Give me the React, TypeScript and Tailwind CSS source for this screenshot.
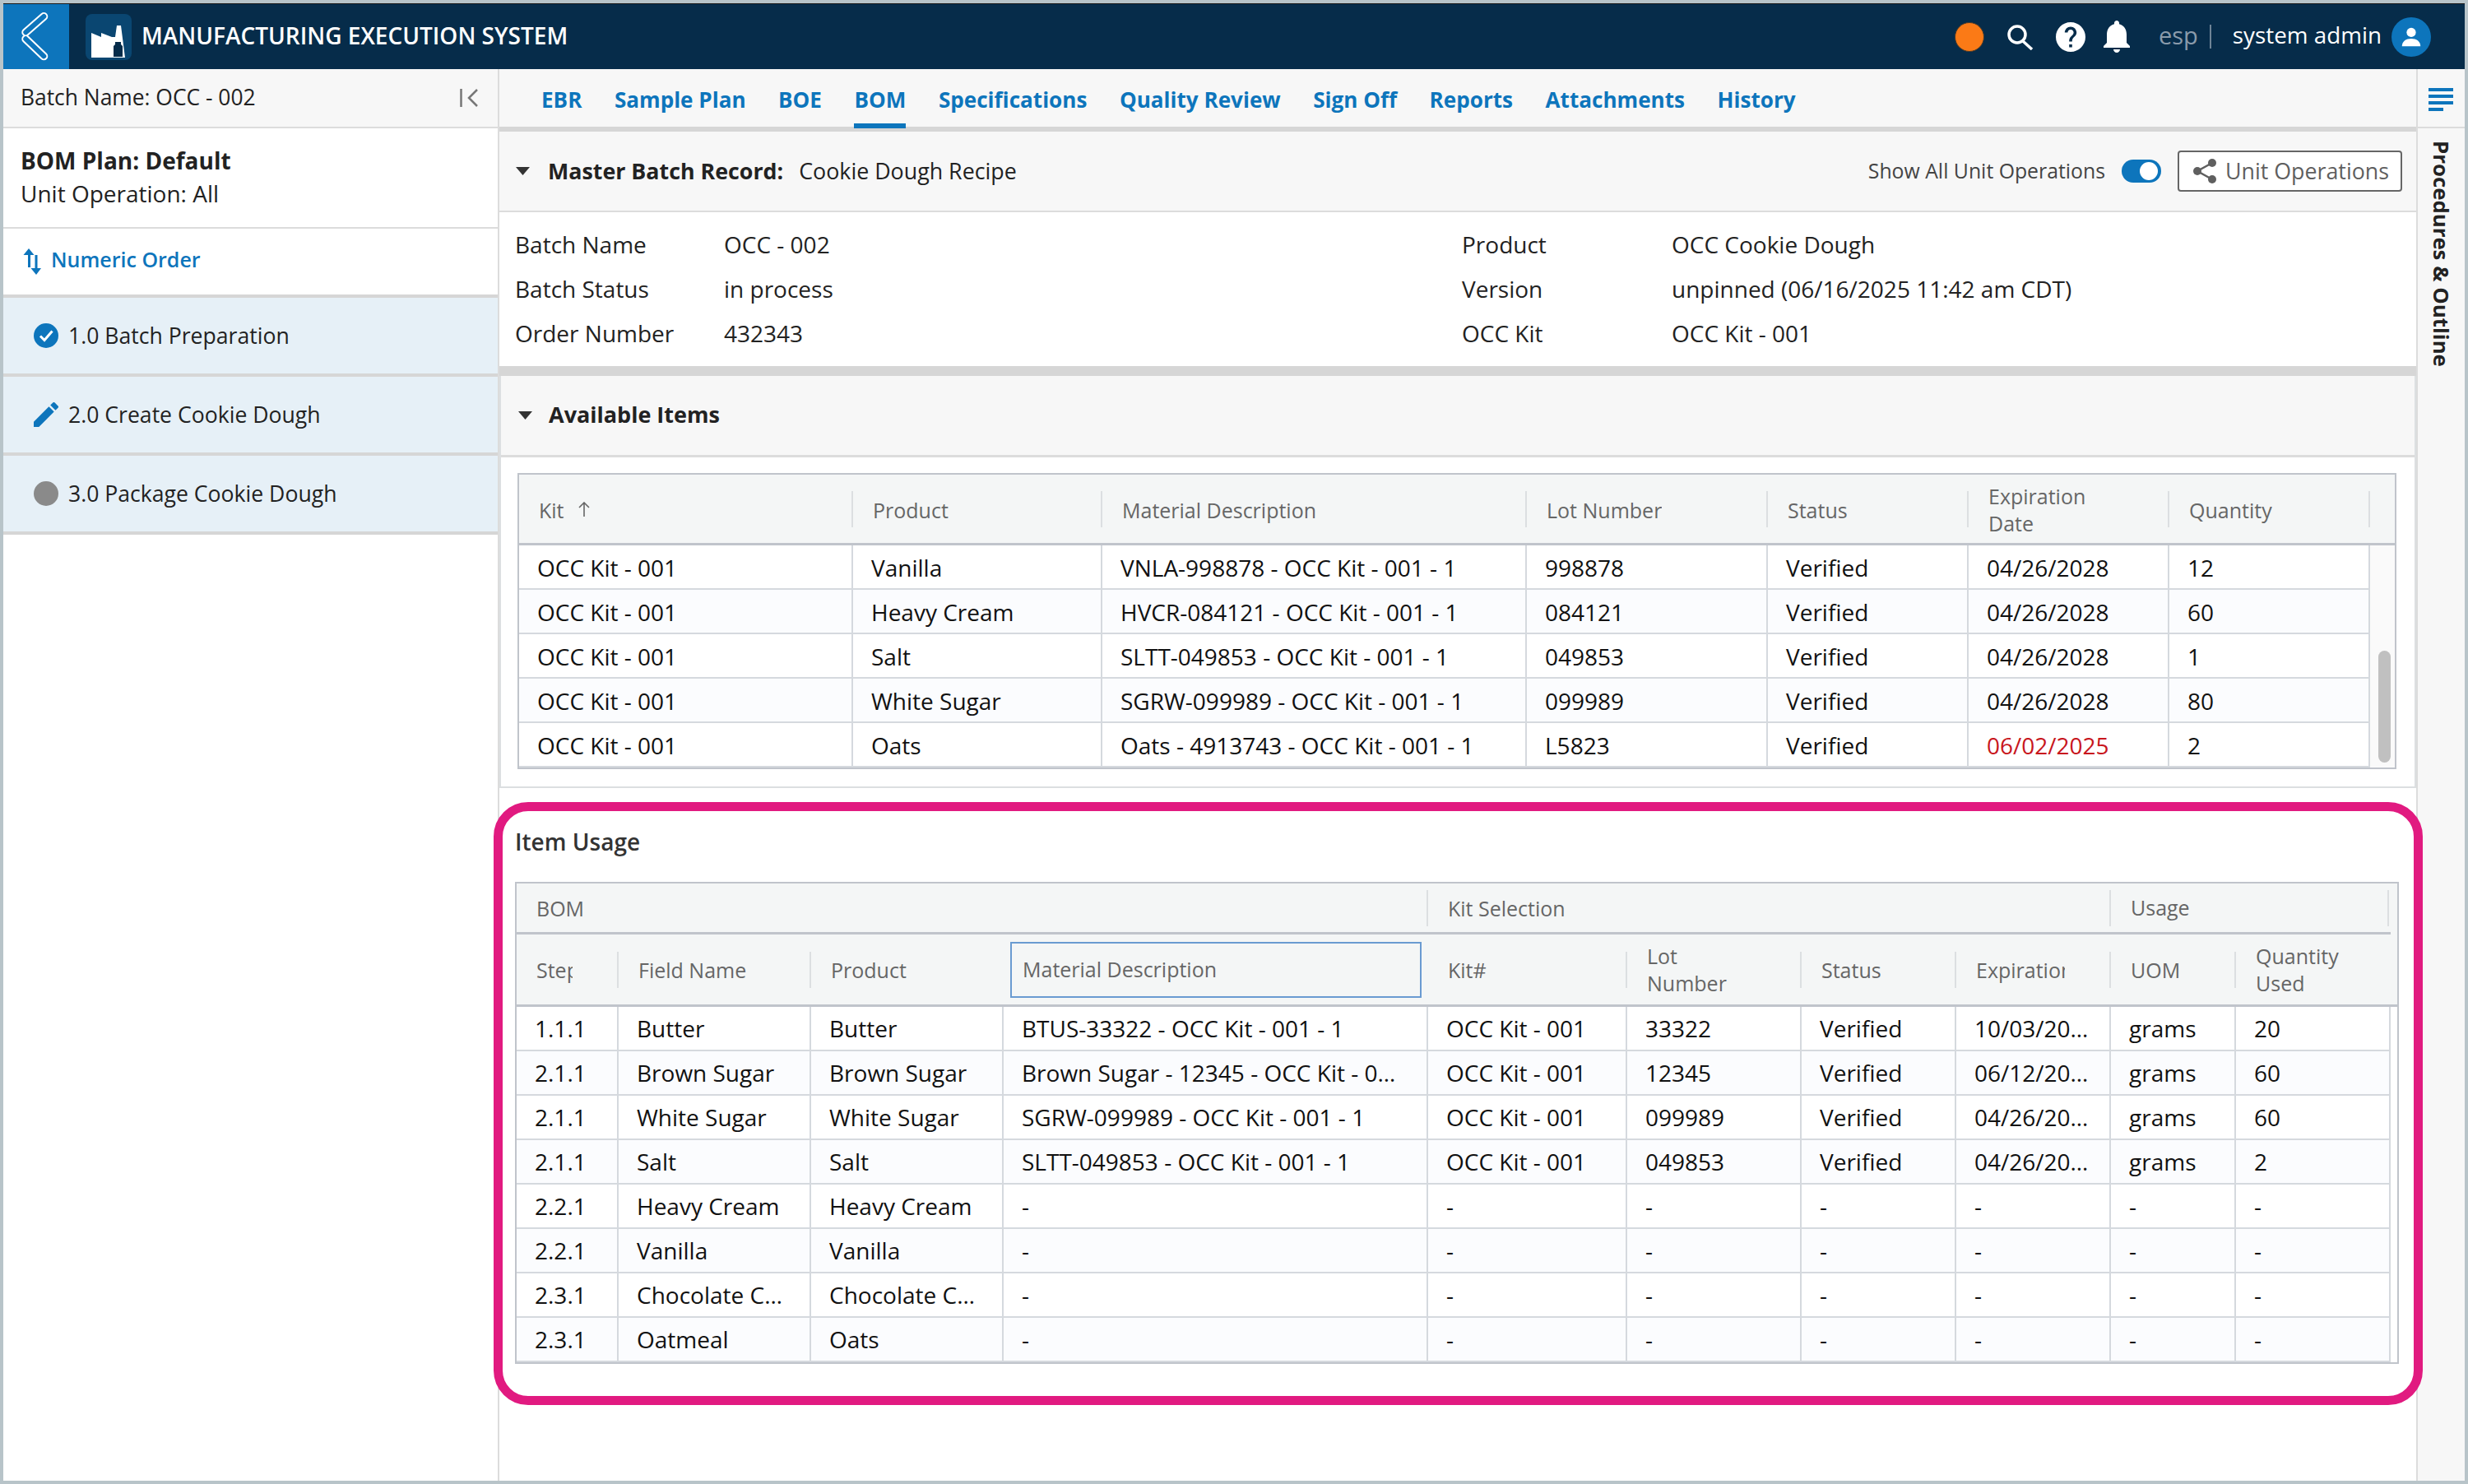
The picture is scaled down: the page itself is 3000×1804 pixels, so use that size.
import React from 'react';

interface StockRow {
  kit: string;
  product: string;
  material: string;
  lot: string;
  date: string;
  qty: string;
  expired?: boolean;
}

const tabs = ['EBR', 'Sample Plan', 'BOE', 'BOM', 'Specifications', 'Quality Review', 'Sign Off', 'Reports', 'Attachments', 'History'];

const stockRows: StockRow[] = [
  { kit: 'OCC Kit - 001', product: 'Vanilla', material: 'VNLA-998878 - OCC Kit - 001 - 1', lot: '998878', date: '04/26/2028', qty: '12' },
  { kit: 'OCC Kit - 001', product: 'Heavy Cream', material: 'HVCR-084121 - OCC Kit - 001 - 1', lot: '084121', date: '04/26/2028', qty: '60' },
  { kit: 'OCC Kit - 001', product: 'Salt', material: 'SLTT-049853 - OCC Kit - 001 - 1', lot: '049853', date: '04/26/2028', qty: '1' },
  { kit: 'OCC Kit - 001', product: 'White Sugar', material: 'SGRW-099989 - OCC Kit - 001 - 1', lot: '099989', date: '04/26/2028', qty: '80' },
  { kit: 'OCC Kit - 001', product: 'Oats', material: 'Oats - 4913743 - OCC Kit - 001 - 1', lot: 'L5823', date: '06/02/2025', qty: '2', expired: true },
];

const usageRows: string[][] = [
  ['1.1.1', 'Butter', 'Butter', 'BTUS-33322 - OCC Kit - 001 - 1', 'OCC Kit - 001', '33322', 'Verified', '10/03/2028', 'grams', '20'],
  ['2.1.1', 'Brown Sugar', 'Brown Sugar', 'Brown Sugar - 12345 - OCC Kit - 001 - 1', 'OCC Kit - 001', '12345', 'Verified', '06/12/2028', 'grams', '60'],
  ['2.1.1', 'White Sugar', 'White Sugar', 'SGRW-099989 - OCC Kit - 001 - 1', 'OCC Kit - 001', '099989', 'Verified', '04/26/2028', 'grams', '60'],
  ['2.1.1', 'Salt', 'Salt', 'SLTT-049853 - OCC Kit - 001 - 1', 'OCC Kit - 001', '049853', 'Verified', '04/26/2028', 'grams', '2'],
  ['2.2.1', 'Heavy Cream', 'Heavy Cream', '-', '-', '-', '-', '-', '-', '-'],
  ['2.2.1', 'Vanilla', 'Vanilla', '-', '-', '-', '-', '-', '-', '-'],
  ['2.3.1', 'Chocolate Chips', 'Chocolate Chips', '-', '-', '-', '-', '-', '-', '-'],
  ['2.3.1', 'Oatmeal', 'Oats', '-', '-', '-', '-', '-', '-', '-'],
];

const stockCols = 'grid-cols-[404px_303px_516px_293px_244px_244px_244px]';
const usageCols = 'grid-cols-[122px_234px_234px_516px_242px_212px_188px_188px_152px_188px]';

const Triangle = () => (
  <svg viewBox="0 0 17 10" className="w-[17px] h-[10px] shrink-0">
    <polygon points="0,0 17,0 8.5,10" fill="#333" />
  </svg>
);

interface HeadCellProps {
  label: string;
  sep?: boolean;
  first?: boolean;
  lower?: boolean;
  children?: React.ReactNode;
}

// header cell: short divider, then the label which clips when too narrow
const HeadCell = ({ label, sep = true, first, lower, children }: HeadCellProps) => (
  <div className="flex items-center min-w-0 overflow-hidden pr-[54px]">
    {!first && (sep ? <div className="w-[2px] h-[44px] bg-[#dcdfe1] shrink-0" /> : <div className="w-[2px] shrink-0" />)}
    <div className={`ml-[24px] min-w-0 overflow-hidden leading-[33px] text-[25px] text-[#666] ${lower ? 'pt-[3px]' : 'pt-[1px]'}`}>{label}</div>
    {children}
  </div>
);

const BodyCell = ({ text, first, red, lower }: { text: string; first?: boolean; red?: boolean; lower?: boolean }) => (
  <div
    className={`truncate leading-[52px] pr-[24px] ${first ? 'pl-[22px]' : 'pl-[22px] border-l-2 border-[#d5d9de]'} ${lower ? 'pt-[1px]' : ''} ${red ? 'text-[#c8161d]' : 'text-[#111]'}`}
  >
    {text}
  </div>
);

const StatusIcon = ({ kind }: { kind: 'done' | 'edit' | 'todo' }) => {
  if (kind === 'done') {
    return (
      <svg viewBox="0 0 30 30" className="w-[30px] h-[30px] shrink-0">
        <circle cx="15" cy="15" r="15" fill="#0d75bc" />
        <path d="M8 15.5l5 5 9.5-11" fill="none" stroke="#fff" strokeWidth="3" />
      </svg>
    );
  }
  if (kind === 'edit') {
    return (
      <svg viewBox="3 3 18 18" className="w-[30px] h-[30px] shrink-0">
        <path fill="#0d75bc" d="M3 17.25V21h3.75L17.81 9.94l-3.75-3.75L3 17.25zM20.71 7.04a1 1 0 000-1.41l-2.34-2.34a1 1 0 00-1.41 0l-1.83 1.83 3.75 3.75 1.83-1.83z" />
      </svg>
    );
  }
  return <div className="w-[30px] h-[30px] rounded-full bg-[#8a8a8a] shrink-0" />;
};

const Sidebar = () => (
  <aside className="w-[601px] shrink-0 bg-white flex flex-col">
    <div className="h-[72px] bg-[#f7f7f7] border-b-2 border-[#dcdcdc] flex items-center justify-between pl-[21px] pr-[22px] text-[26.4px] text-[#222] font-medium">
      <span>Batch Name: OCC - 002</span>
      <svg viewBox="0 0 24 22" className="w-[24px] h-[22px]">
        <path d="M1.5 0v22" stroke="#777" strokeWidth="2.5" fill="none" />
        <path d="M21 1L11 11l10 10" stroke="#777" strokeWidth="2.5" fill="none" />
      </svg>
    </div>
    <div className="h-[122px] border-b-2 border-[#dcdcdc] pl-[21px] pt-[19px] leading-[40px] text-[#222]">
      <div className="font-bold">BOM Plan: Default</div>
      <div>Unit Operation: All</div>
    </div>
    <div className="h-[84px] border-b-4 border-[#d6d6d6] flex items-center pl-[24px] gap-[10px] text-[25px] font-semibold text-[#0d75bc]">
      <svg viewBox="0 0 24 32" className="w-[24px] h-[32px]">
        <path fill="#0d75bc" d="M7 0l6.5 8H9v15H6V8H0.5zM14.5 8h3v16H22l-6 8-6.5-8h5z" />
      </svg>
      <span className="pb-[4px]">Numeric Order</span>
    </div>
    {[
      { kind: 'done' as const, label: '1.0 Batch Preparation' },
      { kind: 'edit' as const, label: '2.0 Create Cookie Dough' },
      { kind: 'todo' as const, label: '3.0 Package Cookie Dough' },
    ].map((row) => (
      <div key={row.label} className="h-[96px] bg-[#e6f0f7] border-b-4 border-[#d6d6d6] flex items-center pl-[37px] gap-[12px] text-[26.6px] font-medium text-[#222]">
        <StatusIcon kind={row.kind} />
        <span className="pt-[1px]">{row.label}</span>
      </div>
    ))}
  </aside>
);

const AvailableItems = () => (
  <section className="border-x-2 border-b-2 border-[#dcdfe1] pb-[21px]">
    <div className="h-[99px] bg-[#f7f7f7] border-b-[3px] border-[#dcdcdc] flex items-center pl-[21px] gap-[20px] pb-[1px]">
      <Triangle />
      <span className="font-bold text-[27px] text-[#222]">Available Items</span>
    </div>
    <div className="mt-[19px] ml-[20px] w-[2284px] border-2 border-[#c0c4cb]">
      <div className="flex h-[86px] bg-[#f4f6f6] border-b-[3px] border-[#c0c4cb]">
        <div className={`grid ${stockCols} h-full`}>
          <HeadCell label="Kit" first lower>
            <svg viewBox="0 0 16 18" className="w-[16px] h-[18px] ml-[16px] shrink-0">
              <path d="M8 18V1M2 7l6-6 6 6" fill="none" stroke="#666" strokeWidth="1.6" />
            </svg>
          </HeadCell>
          <HeadCell label="Product" lower />
          <HeadCell label="Material Description" lower />
          <HeadCell label="Lot Number" lower />
          <HeadCell label="Status" lower />
          <HeadCell label="Expiration Date" lower />
          <HeadCell label="Quantity" lower />
        </div>
        <div className="flex items-center">
          <div className="w-[2px] h-[44px] bg-[#dcdfe1]" />
        </div>
      </div>
      <div className="flex">
        <div className="w-[2248px]">
          {stockRows.map((r, i) => (
            <div key={r.lot} className={`grid ${stockCols} h-[54px] border-b-2 border-[#d5d9de] ${i % 2 ? 'bg-[#fbfcfe]' : 'bg-white'}`}>
              <BodyCell text={r.kit} first lower />
              <BodyCell text={r.product} lower />
              <BodyCell text={r.material} lower />
              <BodyCell text={r.lot} lower />
              <BodyCell text="Verified" lower />
              <BodyCell text={r.date} red={r.expired} lower />
              <BodyCell text={r.qty} lower />
            </div>
          ))}
        </div>
        <div className="flex-1 border-l-2 border-[#d5d9de] bg-[#fafafa] pl-[10px] pt-[128px]">
          <div className="w-[15px] h-[136px] rounded-full bg-[#c0c0c0]" />
        </div>
      </div>
    </div>
  </section>
);

const ItemUsage = () => (
  <section className="relative z-10 mt-[17px] -ml-[7px] w-[2345px] border-[11px] border-[#e11a80] rounded-[42px] bg-white pt-[18px] pb-[39px] pl-[15px]">
    <div className="h-[68px] leading-[38px] font-semibold text-[#333]">Item Usage</div>
    <div className="w-[2290px] border-2 border-[#c0c4cb]">
      <div className="bg-[#f4f6f6]">
        <div className="grid grid-cols-[1106px_830px_340px] w-[2278px] h-[62px] border-b-[3px] border-[#c0c4cb]">
          <HeadCell label="BOM" first />
          <HeadCell label="Kit Selection" />
          <div className="flex items-center justify-between">
            <div className="flex items-center">
              <div className="w-[2px] h-[44px] bg-[#dcdfe1]" />
              <span className="ml-[24px] text-[25px] text-[#666]">Usage</span>
            </div>
            <div className="w-[2px] h-[44px] bg-[#dcdfe1]" />
          </div>
        </div>
        <div className={`grid ${usageCols} h-[88px] border-b-[3px] border-[#c0c4cb]`}>
          <HeadCell label="Step" first />
          <HeadCell label="Field Name" />
          <HeadCell label="Product" />
          <div className="flex items-center">
            <div className="ml-[10px] mr-[6px] flex-1 h-[68px] border-2 border-[#6a9bd1] flex items-center pl-[13px] pt-[1px] text-[25px] text-[#666]">
              Material Description
            </div>
          </div>
          <HeadCell label="Kit#" sep={false} />
          <HeadCell label="Lot Number" />
          <HeadCell label="Status" />
          <HeadCell label="Expiration" />
          <HeadCell label="UOM" />
          <HeadCell label="Quantity Used" />
        </div>
      </div>
      {usageRows.map((row, i) => (
        <div key={i} className={`grid ${usageCols} w-[2278px] h-[54px] border-r-2 border-b-2 border-[#d5d9de] ${i % 2 ? 'bg-[#fbfcfe]' : 'bg-white'}`}>
          {row.map((cell, j) => (
            <BodyCell key={j} text={cell} first={j === 0} />
          ))}
        </div>
      ))}
    </div>
  </section>
);

export default function App() {
  return (
    <div className="w-[3000px] h-[1804px] bg-[#b8c4c9] p-[4px] flex flex-col overflow-hidden text-[28px] [font-family:'Open_Sans',sans-serif]">
      <header className="h-[80px] shrink-0 bg-[#062c4a] border-t border-[#1a1a1a] flex items-center text-white">
        <div className="w-[80px] h-full bg-[#0d75bc] shrink-0">
          <svg viewBox="0 0 80 79" className="w-[80px] h-[79px]">
            <path d="M27.3 34.3L49.3 15M27.3 42.3L49.3 63.3" stroke="#fff" strokeWidth="10" strokeLinecap="round" fill="none" />
            <path d="M27.3 34.3L49.3 15M27.3 42.3L49.3 63.3" stroke="#0d75bc" strokeWidth="6" strokeLinecap="round" fill="none" />
          </svg>
        </div>
        <div className="ml-[20px] w-[56px] h-[56px] rounded-[8px] bg-[#0a4671] shrink-0">
          <svg viewBox="0 0 56 56" className="w-[56px] h-[56px]">
            <path fill="#fff" d="M7 23l12 5v-5l13 5h4l2-14h5l5 39H7z" />
            <path fill="#062c4a" d="M36 34h7v3l2 2v13h-11V39l2-2z" />
          </svg>
        </div>
        <span className="ml-[12px] pb-[3px] font-semibold">MANUFACTURING EXECUTION SYSTEM</span>
        <div className="ml-auto flex items-center pr-[41px]">
          <div className="w-[36px] h-[36px] rounded-full bg-[#fb7a16] border border-[#4a3a2a]" />
          <svg viewBox="0 0 32 32" className="w-[32px] h-[32px] ml-[28px]">
            <circle cx="12" cy="13" r="10" fill="none" stroke="#fff" strokeWidth="3.5" />
            <path d="M19 21l11 10" stroke="#fff" strokeWidth="3.5" fill="none" />
          </svg>
          <svg viewBox="2 2 20 20" className="w-[36px] h-[36px] ml-[27px]">
            <path fill="#fff" d="M12 2C6.48 2 2 6.48 2 12s4.48 10 10 10 10-4.48 10-10S17.52 2 12 2zm1 17h-2v-2h2v2zm2.07-7.75l-.9.92C13.45 12.9 13 13.5 13 15h-2v-.5c0-1.1.45-2.1 1.17-2.83l1.24-1.26c.37-.36.59-.86.59-1.41 0-1.1-.9-2-2-2s-2 .9-2 2H8c0-2.21 1.79-4 4-4s4 1.79 4 4c0 .88-.36 1.68-.93 2.25z" />
          </svg>
          <svg viewBox="4 2.5 16 19.5" className="w-[32px] h-[39px] ml-[22px]">
            <path fill="#fff" d="M12 22c1.1 0 2-.9 2-2h-4c0 1.1.9 2 2 2zm6-6v-5c0-3.07-1.63-5.64-4.5-6.32V4c0-.83-.67-1.5-1.5-1.5s-1.5.67-1.5 1.5v.68C7.64 5.36 6 7.92 6 11v5l-2 2v1h16v-1l-2-2z" />
          </svg>
          <span className="ml-[35px] pb-[3px] text-[29px] text-[#8a9bab]">esp</span>
          <div className="ml-[14px] w-[2px] h-[29px] bg-[#6f8496]" />
          <span className="ml-[26px] pb-[3px] text-[27.8px]">system admin</span>
          <div className="ml-[12px] w-[48px] h-[48px] rounded-full bg-[#0d75bc] flex items-center justify-center">
            <svg viewBox="0 0 24 24" className="w-[30px] h-[30px]">
              <circle cx="12" cy="7.5" r="4.5" fill="#fff" />
              <path d="M3 21c0-5 4-7.5 9-7.5s9 2.5 9 7.5z" fill="#fff" />
            </svg>
          </div>
        </div>
      </header>

      <div className="flex flex-1 min-h-0">
        <Sidebar />

        <main className="flex-1 min-w-0 bg-white border-l-2 border-[#dcdcdc]">
          <nav className="h-[76px] bg-[#f7f7f7] border-b-[6px] border-[#d6d6d6] flex items-start pl-[51px] gap-[39.5px] text-[26.1px] font-bold text-[#0d75bc]">
            {tabs.map((tab) => (
              <div key={tab} className={`h-[72px] pt-[18px] leading-[38px] ${tab === 'BOM' ? 'border-b-[6px] border-[#0d75bc]' : ''}`}>
                {tab}
              </div>
            ))}
          </nav>

          <div className="h-[98px] bg-[#f7f7f7] border-b-2 border-[#dcdcdc] flex items-center pl-[20px] pr-[17px]">
            <Triangle />
            <span className="ml-[22px] font-bold text-[26.8px] text-[#222]">Master Batch Record:</span>
            <span className="ml-[19px] font-medium text-[26.8px] text-[#222]">Cookie Dough Recipe</span>
            <span className="ml-auto text-[24.8px] font-medium text-[#444]">Show All Unit Operations</span>
            <div className="ml-[20px] w-[48px] h-[28px] rounded-full bg-[#0d75bc] flex items-center justify-end pr-[4px]">
              <div className="w-[22px] h-[22px] rounded-full bg-white" />
            </div>
            <button className="ml-[20px] w-[273px] h-[50px] border-2 border-[#666] rounded-[4px] bg-white flex items-center pl-[16px] gap-[10px] text-[26.8px] font-medium text-[#5f5f5f]">
              <svg viewBox="0 0 30 32" className="w-[30px] h-[32px] shrink-0">
                <path d="M24 6L6 16l18 10" fill="none" stroke="#5f5f5f" strokeWidth="2.5" />
                <circle cx="24" cy="6" r="5" fill="#5f5f5f" />
                <circle cx="6" cy="16" r="5" fill="#5f5f5f" />
                <circle cx="24" cy="26" r="5" fill="#5f5f5f" />
              </svg>
              Unit Operations
            </button>
          </div>

          <div className="grid grid-cols-[254px_897px_255px_1fr] auto-rows-[54px] leading-[54px] pl-[19px] pt-[12px] pb-[13px] border-b-[12px] border-[#d6d6d6] text-[#222]">
            <div>Batch Name</div>
            <div>OCC - 002</div>
            <div>Product</div>
            <div>OCC Cookie Dough</div>
            <div>Batch Status</div>
            <div>in process</div>
            <div>Version</div>
            <div>unpinned (06/16/2025 11:42 am CDT)</div>
            <div>Order Number</div>
            <div>432343</div>
            <div>OCC Kit</div>
            <div>OCC Kit - 001</div>
          </div>

          <AvailableItems />
          <ItemUsage />
        </main>

        <aside className="w-[59px] shrink-0 bg-[#f7f7f7] border-l-2 border-[#dcdcdc]">
          <div className="h-[72px] border-b-2 border-[#dcdcdc] flex flex-col gap-[4px] pt-[23px] pl-[13px]">
            <div className="w-[30px] h-[4px] bg-[#0d75bc]" />
            <div className="w-[30px] h-[4px] bg-[#0d75bc]" />
            <div className="w-[30px] h-[4px] bg-[#0d75bc]" />
            <div className="w-[18px] h-[4px] bg-[#0d75bc]" />
          </div>
          <div className="flex justify-center pt-[15px]">
            <span className="[writing-mode:vertical-rl] text-[25.8px] font-bold leading-none text-[#222]">Procedures &amp; Outline</span>
          </div>
        </aside>
      </div>
    </div>
  );
}
